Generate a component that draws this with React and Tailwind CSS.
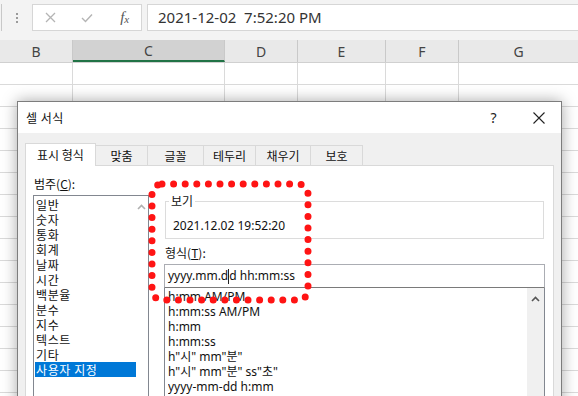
import React from 'react';

const cols = [
  { id: 'B', w: 'w-[73px]' },
  { id: 'C', w: 'w-[152px]', sel: true },
  { id: 'D', w: 'w-[73px]' },
  { id: 'E', w: 'w-[88px]' },
  { id: 'F', w: 'w-[73px]' },
  { id: 'G', w: 'w-[120px]' },
];

const categories = ['일반', '숫자', '통화', '회계', '날짜', '시간', '백분율', '분수', '지수', '텍스트', '기타', '사용자 지정'];

const formats = ['h:mm AM/PM', 'h:mm:ss AM/PM', 'h:mm', 'h:mm:ss', 'h"시" mm"분"', 'h"시" mm"분" ss"초"', 'yyyy-mm-dd h:mm'];

const tabs = [
  { label: '표시 형식', w: 'w-[71px]', active: true },
  { label: '맞춤', w: 'w-[52px]' },
  { label: '글꼴', w: 'w-[56px]' },
  { label: '테두리', w: 'w-[52px]' },
  { label: '채우기', w: 'w-[55px]' },
  { label: '보호', w: 'w-[52px]' },
];

function Chevron({ color = '#555' }) {
  return (
    <svg width="9" height="6" viewBox="0 0 9 6">
      <path d="M1 5 L4.5 1.5 L8 5" fill="none" stroke={color} strokeWidth="1.6" />
    </svg>
  );
}

function Sheet() {
  return (
    <div className="flex flex-col">
      {/* formula bar */}
      <div className="h-[40px] bg-[#f3f3f3] flex items-start pt-[4px] relative">
        <div className="w-[1px] h-[27px] bg-[#c8c8c8] ml-[1px]" />
        <div className="w-[30px] h-[27px] flex flex-col items-center justify-center gap-[2px]">
          <span className="w-[2px] h-[2px] bg-[#9a9a9a]" />
          <span className="w-[2px] h-[2px] bg-[#9a9a9a]" />
          <span className="w-[2px] h-[2px] bg-[#9a9a9a]" />
        </div>
        <div className="w-[110px] h-[27px] bg-white border border-[#d6d6d6] flex items-center">
          <div className="w-[36px] flex justify-center">
            <svg width="11" height="11" viewBox="0 0 11 11">
              <path d="M1 1 L10 10 M10 1 L1 10" stroke="#b4b4b4" strokeWidth="1.3" />
            </svg>
          </div>
          <div className="w-[37px] flex justify-center">
            <svg width="12" height="10" viewBox="0 0 12 10">
              <path d="M1 5 L4.5 8.5 L11 1.5" fill="none" stroke="#b4b4b4" strokeWidth="1.4" />
            </svg>
          </div>
          <div className="w-[36px] flex justify-center pl-[3px] text-[#555] italic font-['Liberation_Serif',serif] text-[15px] leading-none">
            f<span className="text-[11px] mt-[4px]">x</span>
          </div>
        </div>
        <div className="ml-[5px] flex-1 h-[27px] bg-white border border-[#d6d6d6] border-r-0 flex items-center pl-[10px] text-[15px] text-[#333] font-['Noto_Sans',sans-serif] whitespace-pre">
          2021-12-02  7:52:20 PM
        </div>
      </div>
      {/* column headers */}
      <div className="flex h-[23px] bg-[#e9e9e9] border-b border-[#d0d0d0]">
        {cols.map((c) => (
          <div
            key={c.id}
            className={`${c.w} shrink-0 border-r border-[#c9c9c9] flex items-center justify-center text-[14px] text-[#444] font-['Noto_Sans',sans-serif] ${c.sel ? 'bg-[#d2d2d2] border-b-2 border-b-[#217346]' : ''}`}
          >
            {c.id}
          </div>
        ))}
      </div>
      {/* rows */}
      {Array.from({ length: 15 }).map((_, r) => (
        <div key={r} className="flex h-[22px] bg-white border-b border-[#dadada]">
          {cols.map((c) => (
            <div key={c.id} className={`${c.w} shrink-0 border-r border-[#dadada]`} />
          ))}
        </div>
      ))}
    </div>
  );
}

function Dialog() {
  return (
    <div className="absolute left-[17px] top-[101px] w-[545px] h-[330px] border border-[#7d7d7d] bg-[#f0f0f0] shadow-[0_0_14px_rgba(0,0,0,0.35)] flex flex-col font-['Noto_Sans','Noto_Sans_CJK_KR',sans-serif] text-[12px] text-[#111]">
      {/* title bar */}
      <div className="h-[31px] bg-white flex items-center">
        <div className="pl-[8px] flex-1 text-[12px] tracking-[0.5px] font-['Noto_Sans_CJK_KR',sans-serif]">셀 서식</div>
        <div className="w-[45px] flex justify-center text-[14px] text-[#222] font-['Noto_Sans',sans-serif]">?</div>
        <div className="w-[45px] flex justify-center">
          <svg width="12" height="12" viewBox="0 0 12 12">
            <path d="M0.5 0.5 L11.5 11.5 M11.5 0.5 L0.5 11.5" stroke="#222" strokeWidth="1.1" />
          </svg>
        </div>
      </div>
      {/* body */}
      <div className="flex-1 px-[7px] pt-[10px]">
        <div className="flex items-end h-[22px]">
          {tabs.map((t) => (
            <div
              key={t.label}
              className={`${t.w} flex items-center justify-center border border-[#d9d9d9] font-['Noto_Sans_CJK_KR',sans-serif] ${t.active ? 'h-[23px] bg-white border-b-0 relative z-10 -mb-px' : 'h-[20px] bg-[#f0f0f0] border-b-0 border-l-0'}`}
            >
              {t.label}
            </div>
          ))}
        </div>
        <div className="bg-white border border-[#d9d9d9] h-[260px] pl-[7px] pt-[10px] flex">
          {/* left column */}
          <div className="w-[116px] flex flex-col">
            <div className="h-[19px] pl-[1px] leading-[16px] font-['Noto_Sans_CJK_KR',sans-serif]">
              범주(<span className="underline">C</span>):
            </div>
            <div className="h-[220px] border border-[#828790] p-[1px] flex">
              <div className="flex-1 flex flex-col font-['Noto_Sans_CJK_KR',sans-serif] tracking-[0.6px]">
                {categories.map((c) => (
                  <div
                    key={c}
                    className={`h-[15px] leading-[15px] pl-[1px] overflow-hidden ${c === '사용자 지정' ? 'bg-[#0078d7] text-white' : ''}`}
                  >
                    {c}
                  </div>
                ))}
              </div>
              <div className="w-[11px] flex justify-center pt-[7px]">
                <Chevron color="#b0b0b0" />
              </div>
            </div>
          </div>
          {/* right column */}
          <div className="ml-[15px] w-[381px] flex flex-col">
            <fieldset className="mt-[18px] ml-[1px] w-[379px] border border-[#dcdcdc]">
              <legend className="ml-[3px] px-[2px] leading-[14px] font-['Noto_Sans_CJK_KR',sans-serif]">보기</legend>
              <div className="h-[30px] pt-[11px] pl-[7px] leading-[14px] font-['Noto_Sans',sans-serif]">2021.12.02 19:52:20</div>
            </fieldset>
            <div className="mt-[7px] h-[14px] leading-[14px] pl-[1px] font-['Noto_Sans_CJK_KR',sans-serif]">
              형식(<span className="underline">T</span>):
            </div>
            <div className="mt-[4px] h-[24px] border border-[#abadb3] border-b-[#7a7a7a] flex items-center pl-[3px] font-['Noto_Sans',sans-serif]">
              yyyy.mm.d<span className="inline-block w-px h-[15px] bg-[#222]" />d hh:mm:ss
            </div>
            <div className="h-[120px] border border-[#828790] border-t-0 flex">
              <div className="flex-1 pt-[1px] pl-[3px] flex flex-col font-['Noto_Sans','Noto_Sans_CJK_KR',sans-serif]">
                {formats.map((f) => (
                  <div key={f} className="h-[15px] leading-[15px] overflow-hidden">{f}</div>
                ))}
              </div>
              <div className="w-[17px] bg-[#f0f0f0] flex justify-center pt-[8px]">
                <Chevron color="#555" />
              </div>
            </div>
          </div>
        </div>
      </div>
    </div>
  );
}

export default function App() {
  return (
    <div className="w-[578px] h-[396px] overflow-hidden relative bg-white">
      <Sheet />
      <Dialog />
      {/* red dotted highlight */}
      <svg className="absolute left-[148px] top-[180px]" width="164" height="124" viewBox="0 0 164 124">
        <rect x="4" y="4" width="156" height="116" rx="10" fill="none" stroke="#ff1414" strokeWidth="7" strokeLinecap="round" strokeDasharray="0 11.6" />
      </svg>
    </div>
  );
}
